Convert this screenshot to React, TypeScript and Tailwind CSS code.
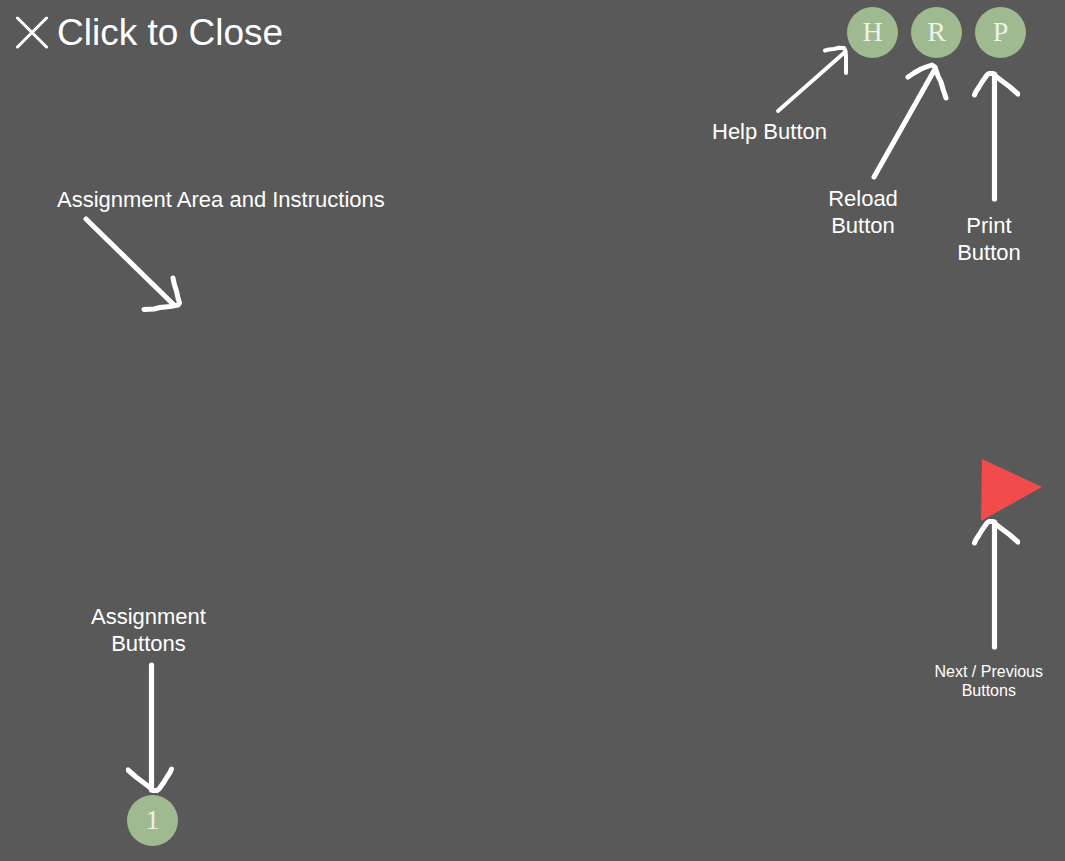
import type { ReactNode } from "react";

function RoundButton({ label, className = "", children }: { label: string; className?: string; children: ReactNode }) {
  return (
    <button
      type="button"
      aria-label={label}
      className={`flex size-[51px] shrink-0 items-center justify-center rounded-full bg-[#9fb991] pb-[2px] font-['Liberation_Serif','Times_New_Roman',serif] text-[28px] leading-8 text-white/80 ${className}`}
    >
      {children}
    </button>
  );
}

function StraightArrow({ className = "" }: { className?: string }) {
  return (
    <svg
      viewBox="0 0 50 134"
      className={`h-[134px] w-[50px] shrink-0 fill-none stroke-white ${className}`}
      strokeLinecap="round"
      strokeLinejoin="round"
      aria-hidden="true"
    >
      <path strokeWidth="5.200" d="M24.500 5V130" />
      <path strokeWidth="5" d="M4.500 26L6 22.500L9 18L12 13L17 6L19 4.500H23L28 9L36 15L40 18L48 25" />
    </svg>
  );
}

function HelpArrow() {
  return (
    <svg
      viewBox="0 0 74 70"
      className="h-[70px] w-[74px] self-end fill-none stroke-white"
      strokeLinecap="round"
      strokeLinejoin="round"
      aria-hidden="true"
    >
      <path strokeWidth="3.800" d="M4 67L71 8" />
      <path strokeWidth="4" d="M51 6.500L55 5.500L60 5L65 3.800L70 4L71.500 7L72 13L72 19L72 29" />
    </svg>
  );
}

function ReloadArrow() {
  return (
    <svg
      viewBox="0 0 78 120"
      className="h-[120px] w-[78px] self-end overflow-visible fill-none stroke-white"
      strokeLinecap="round"
      strokeLinejoin="round"
      aria-hidden="true"
    >
      <path strokeWidth="5" d="M4 115L65 7" />
      <path strokeWidth="5" d="M38 15L44 11L51 7L56 5L62 3L65 5L68 14L71 20L73 27L76 36" />
    </svg>
  );
}

function AreaArrow() {
  return (
    <svg
      viewBox="0 0 102 100"
      className="ml-[26px] h-[100px] w-[102px] fill-none stroke-white"
      strokeLinecap="round"
      strokeLinejoin="round"
      aria-hidden="true"
    >
      <path strokeWidth="5" d="M3 5L91 91" />
      <path strokeWidth="5" d="M90 64L91.500 71L93.500 77L95 84L96.500 89L95 91L87 92.500L77 93.500L71 95L61 95.500" />
    </svg>
  );
}

export default function App() {
  return (
    <main className="flex min-h-screen flex-col overflow-x-hidden bg-[#595959] font-['Liberation_Sans',Arial,sans-serif] text-[22px] leading-[27px] text-white">
      <header className="flex items-center justify-between pt-[7px] pr-[39px] pl-[15px]">
        <button type="button" className="flex items-center gap-2 text-[37px] leading-[44px]">
          <svg
            viewBox="0 0 34 34"
            className="size-[34px] fill-none stroke-white"
            strokeWidth="3"
            strokeLinecap="round"
            aria-hidden="true"
          >
            <path d="M2.500 2L31.500 31M31.500 2L2.500 31" />
          </svg>
          Click to Close
        </button>
        <nav aria-label="Tools" className="flex gap-[13px]">
          <RoundButton label="Help">H</RoundButton>
          <RoundButton label="Reload">R</RoundButton>
          <RoundButton label="Print">P</RoundButton>
        </nav>
      </header>

      <div className="flex flex-1 justify-between">
        <section className="flex flex-col justify-between pt-32 pb-[15px] pl-[57px]">
          <div className="flex flex-col gap-[1px]">
            <p>Assignment Area and Instructions</p>
            <AreaArrow />
          </div>
          <div className="ml-[34px] flex flex-col items-center self-start">
            <p className="text-center">
              Assignment
              <br />
              Buttons
            </p>
            <StraightArrow className="mt-1 ml-[6px] rotate-180" />
            <RoundButton label="Assignment 1" className="ml-2">
              1
            </RoundButton>
          </div>
        </section>

        <section className="-mt-[14px] flex flex-col items-end">
          <div className="flex items-start pr-11">
            <div className="flex w-[136px] flex-col gap-1">
              <HelpArrow />
              <p>Help Button</p>
            </div>
            <div className="-ml-5 flex w-[120px] flex-col gap-[3px] pt-[18px]">
              <ReloadArrow />
              <p className="w-[70px] text-center">
                Reload
                <br />
                Button
              </p>
            </div>
            <div className="ml-[9px] flex w-16 flex-col items-center gap-[9px] pt-[25px]">
              <StraightArrow className="ml-3" />
              <p className="text-center">
                Print
                <br />
                Button
              </p>
            </div>
          </div>

          <div className="flex flex-1 flex-col items-center justify-center pt-8 pr-[22px]">
            <button type="button" aria-label="Next" className="self-end">
              <svg viewBox="0 0 62 62" className="block size-[62px] fill-[#f14b4b]" aria-hidden="true">
                <path d="M1 0L61 28L0 62Z" />
              </svg>
            </button>
            <StraightArrow className="-mt-1 ml-3" />
            <p className="mt-[11px] text-center text-base leading-[19px]">
              Next / Previous
              <br />
              Buttons
            </p>
          </div>
        </section>
      </div>
    </main>
  );
}
